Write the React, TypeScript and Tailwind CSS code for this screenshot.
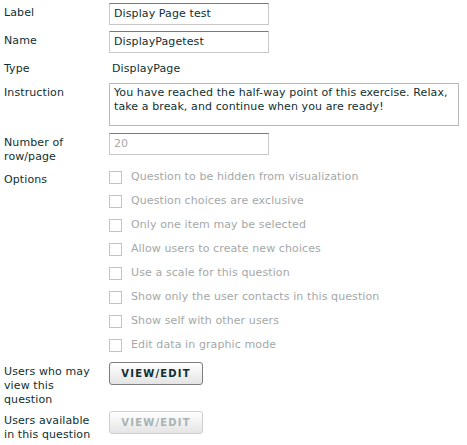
import React from 'react';

const options = [
  'Question to be hidden from visualization',
  'Question choices are exclusive',
  'Only one item may be selected',
  'Allow users to create new choices',
  'Use a scale for this question',
  'Show only the user contacts in this question',
  'Show self with other users',
  'Edit data in graphic mode',
];

function Label({ children }: { children: React.ReactNode }) {
  return <div className="w-[109px] shrink-0 pl-[4px] pr-[12px] pt-[3px] leading-[14px]">{children}</div>;
}

function TextInput({ value, muted = false }: { value: string; muted?: boolean }) {
  return (
    <div
      className={`flex h-[22px] w-[160px] items-center border border-[#c8c8c8] border-t-[#7a7a7a] bg-white pl-[4px] ${
        muted ? 'text-[#a8a8a8]' : ''
      }`}
    >
      {value}
    </div>
  );
}

function Button({ disabled = false }: { disabled?: boolean }) {
  return (
    <div
      className={`flex h-[23px] w-[94px] items-center justify-center rounded-[3px] border bg-gradient-to-b from-white to-[#e4e4e4] text-[10px] font-bold tracking-[1.2px] ${
        disabled ? 'border-[#cfcfcf] text-[#a9b3b3]' : 'border-[#7d7d7d] text-[#0f2f2f]'
      }`}
    >
      VIEW/EDIT
    </div>
  );
}

export default function App() {
  return (
    <div
      className="h-[445px] w-[467px] bg-white pt-[3px] text-[11px] tracking-[0.1px] text-[#0f3030]"
      style={{ fontFamily: '"DejaVu Sans", Verdana, sans-serif' }}
    >
      <div className="flex">
        <Label>Label</Label>
        <TextInput value="Display Page test" />
      </div>
      <div className="mt-[6px] flex">
        <Label>Name</Label>
        <TextInput value="DisplayPagetest" />
      </div>
      <div className="mt-[6px] flex h-[18px]">
        <Label>Type</Label>
        <div className="pl-[3px] pt-[3px] leading-[14px]">DisplayPage</div>
      </div>
      <div className="mt-[6px] flex">
        <Label>Instruction</Label>
        <div className="h-[43px] w-[350px] border border-[#b9b9b9] bg-white pl-[4px] pr-[2px] pt-[2px] leading-[14px]">
          You have reached the half-way point of this exercise. Relax, take a break, and continue when you are ready!
        </div>
      </div>
      <div className="mt-[7px] flex">
        <Label>Number of row/page</Label>
        <TextInput value="20" muted />
      </div>
      <div className="mt-[6px] flex">
        <Label>Options</Label>
        <div className="flex flex-col gap-[11px] pt-[1px]">
          {options.map((o) => (
            <div key={o} className="flex h-[13px] items-center text-[#a4a8a8]">
              <div className="mr-[9px] h-[13px] w-[13px] border border-[#c4c4c4] bg-white" />
              <span>{o}</span>
            </div>
          ))}
        </div>
      </div>
      <div className="mt-[10px] flex">
        <Label>Users who may view this question</Label>
        <Button />
      </div>
      <div className="mt-[4px] flex">
        <Label>Users available in this question</Label>
        <Button disabled />
      </div>
    </div>
  );
}
